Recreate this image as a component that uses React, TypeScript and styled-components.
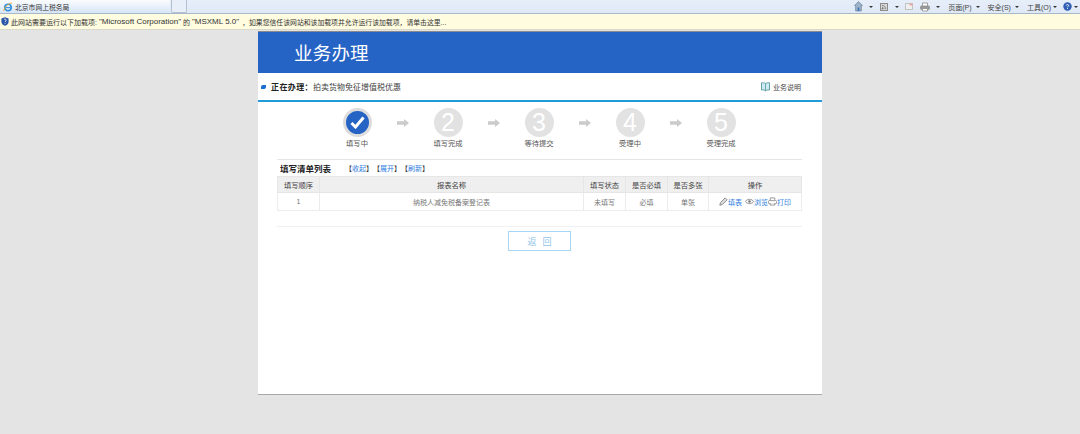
import React, {FC} from 'react';
import styled, {createGlobalStyle} from 'styled-components';

const GlobalStyle = createGlobalStyle`
  html, body {
    margin: 0;
    padding: 0;
    background: #e4e4e4;
  }
  body {
    font-family: "Liberation Sans", "Noto Sans CJK SC", sans-serif;
    overflow: hidden;
  }
`;

const Screen = styled.div`
  width: 1080px;
  height: 434px;
  display: flex;
  flex-direction: column;
  overflow: hidden;
`;

const TabStrip = styled.div`
  height: 13px;
  flex: none;
  display: flex;
  justify-content: space-between;
  background: linear-gradient(#e6eef9, #dfe9f6);
  border-bottom: 1px solid #a9b8c9;
`;

const Tabs = styled.div`
  display: flex;
  gap: 1px;
`;

const ActiveTab = styled.div`
  width: 170px;
  height: 13px;
  display: flex;
  align-items: center;
  gap: 2px;
  padding-left: 3px;
  box-sizing: border-box;
  background: linear-gradient(#fbfcfe, #d6e6f8);
  font-size: 6.8px;
  color: #333;
`;

const NewTab = styled.div`
  width: 16px;
  height: 13px;
  box-sizing: border-box;
  background: #e9eff8;
  border: 1px solid #b4c0cf;
  border-top: none;
  border-radius: 0 0 2px 2px;
`;

const Tools = styled.div`
  display: flex;
  align-items: center;
  padding-right: 2px;
  font-size: 7px;
  color: #444;
`;

const ToolIcon = styled.span<{ $ml?: number }>`
  display: flex;
  margin-left: ${({$ml = 7}) => $ml}px;
`;

const ToolLabel = styled.span`
  margin-left: 8px;
  white-space: nowrap;
`;

const Caret = styled.span<{ $ml?: number }>`
  width: 0;
  height: 0;
  margin-left: ${({$ml = 6}) => $ml}px;
  border-left: 2.5px solid transparent;
  border-right: 2.5px solid transparent;
  border-top: 2.5px solid #333;
`;

const InfoBar = styled.div`
  height: 15px;
  flex: none;
  display: flex;
  align-items: center;
  padding-left: 1px;
  background: #fffce0;
  border-bottom: 1px solid #d8d8cc;
  font-size: 7px;
  color: #333;
  white-space: pre;
`;

const InfoIcon = styled.span`
  display: flex;
  margin-right: 2px;
`;

const Latin = styled.span`
  font-size: 8px;
`;

const InfoRest = styled.span`
  margin-left: 3px;
  font-size: 6.85px;
`;

const Stage = styled.div`
  flex: 1;
  display: flex;
  justify-content: center;
  align-items: flex-start;
`;

const Page = styled.div`
  width: 564px;
  height: 364px;
  margin-top: 1px;
  box-sizing: border-box;
  background: #fff;
  border-top: 1px solid #8a8a8a;
  border-bottom: 1px solid #a8a8a8;
`;

const Banner = styled.div`
  height: 41px;
  box-sizing: border-box;
  display: flex;
  align-items: center;
  padding: 0 0 2px 36px;
  background: #2563c5;
  color: #fff;
  font-size: 18.5px;
  letter-spacing: 0.2px;
`;

const Working = styled.div`
  height: 27px;
  display: flex;
  align-items: center;
  padding: 0 21px 0 3px;
  border-bottom: 2px solid #1f9bd8;
  font-size: 8px;
  color: #444;
`;

const Dot = styled.span`
  width: 5px;
  height: 4px;
  margin-right: 5px;
  background: #1b6fd0;
  border-radius: 2px 0 2px 0;
`;

const WorkingLabel = styled.b`
  color: #222;
  letter-spacing: 0.4px;
`;

const HelpLink = styled.span`
  margin-left: auto;
  display: flex;
  align-items: center;
  gap: 3px;
  font-size: 7px;
  color: #444;
`;

const Steps = styled.div`
  display: flex;
  justify-content: center;
  align-items: flex-start;
  padding: 6px 2px 0 0;
  height: 51px;
`;

const Step = styled.div`
  width: 30px;
  display: flex;
  flex-direction: column;
  align-items: center;
`;

const Circle = styled.div<{ $active?: boolean }>`
  width: 29px;
  height: 29px;
  flex: none;
  box-sizing: border-box;
  display: flex;
  align-items: center;
  justify-content: center;
  border-radius: 50%;
  background: ${({$active}) => ($active ? '#2563c5' : '#e2e2e2')};
  border: ${({$active}) => ($active ? '3px solid #dcdcdc' : 'none')};
  color: #fff;
  font-size: 25px;
`;

const StepName = styled.div`
  margin-top: 2px;
  font-size: 7.3px;
  line-height: 10px;
  color: #555;
  white-space: nowrap;
`;

const StepArrow = styled.div`
  width: 61px;
  height: 29px;
  display: flex;
  align-items: center;
  justify-content: center;
`;

const Content = styled.div`
  margin: 0 20px 0 19px;
`;

const ListHead = styled.div`
  height: 16px;
  display: flex;
  align-items: center;
  gap: 14px;
  padding-left: 3px;
  border-top: 1px solid #e6e6e6;
  font-size: 8.5px;
  font-weight: bold;
  color: #222;
`;

const Actions = styled.div`
  display: flex;
  font-size: 7px;
  font-weight: normal;
  color: #333;
`;

const Link = styled.span`
  color: #2f7de0;
`;

const Table = styled.table`
  width: 100%;
  border-collapse: collapse;
  table-layout: fixed;
  font-size: 7px;
  color: #777;
`;

const Th = styled.th<{ $w?: number }>`
  width: ${({$w}) => ($w ? `${$w}px` : 'auto')};
  height: 15px;
  padding: 0;
  background: #efefef;
  border: 1px solid #e6e6e6;
  font-size: 7.3px;
  font-weight: normal;
  color: #444;
`;

const Td = styled.td`
  height: 17px;
  padding: 0;
  border: 1px solid #ececec;
  text-align: center;
`;

const OpsRow = styled.div`
  display: flex;
  justify-content: center;
  align-items: center;
  white-space: nowrap;
  color: #2f7de0;
`;

const OpIcon = styled.svg`
  flex: none;
`;

const OpGap = styled.span`
  width: 3px;
`;

const Footer = styled.div`
  margin-top: 15px;
  padding-top: 4px;
  border-top: 1px solid #f0f0f0;
  display: flex;
  justify-content: center;
`;

const BackButton = styled.div`
  width: 63px;
  height: 20px;
  box-sizing: border-box;
  display: flex;
  align-items: center;
  justify-content: center;
  border: 1px solid #a8d4f5;
  color: #8fc4ec;
  font-size: 9px;
  letter-spacing: 6px;
  text-indent: 6px;
`;

const IeIcon: FC = () => (
  <svg width="10" height="10" viewBox="0 0 10 10">
    <circle cx="5" cy="5.5" r="3.2" fill="none" stroke="#2f8fe0" strokeWidth="1.6"/>
    <path d="M2.5 5.6h5" stroke="#2f8fe0" strokeWidth="1.1"/>
    <path d="M1 9C0 7 5 1 9 1" fill="none" stroke="#e9a520" strokeWidth="0.9"/>
  </svg>
);

const ShieldIcon: FC = () => (
  <svg width="8" height="9" viewBox="0 0 8 9">
    <path d="M4 0.3 7.6 1.5V5C7.6 7 5.6 8.3 4 8.8 2.4 8.3 .4 7 .4 5V1.5Z" fill="#2c56a8"/>
    <path d="M3 2.6C3.4 1.8 5.3 2 5.2 3.2 5.1 4 4.1 4 4.1 5M4.1 5.9v.9" fill="none" stroke="#fff" strokeWidth=".8"/>
  </svg>
);

const HomeIcon: FC = () => (
  <svg width="9" height="11" viewBox="0 0 9 11">
    <path d="M4.5 0.5 8.5 4.5H7.4V10H1.6V4.5H.5Z" fill="#9fb3c8" stroke="#5d7a99" strokeWidth=".6"/>
    <path d="M3.6 6.5h1.8V10H3.6Z" fill="#3c74b4"/>
  </svg>
);

const FeedIcon: FC = () => (
  <svg width="8" height="8" viewBox="0 0 8 8">
    <rect x=".5" y=".5" width="7" height="7" fill="#d7d7d7" stroke="#8d8d8d"/>
    <path d="M2 2.3C4 2.3 5.7 4 5.7 6M2 4.2C3 4.2 3.8 5 3.8 6" fill="none" stroke="#707070" strokeWidth=".8"/>
    <circle cx="2.3" cy="5.8" r=".7" fill="#707070"/>
  </svg>
);

const MailIcon: FC = () => (
  <svg width="8" height="7" viewBox="0 0 8 7">
    <rect x=".5" y=".5" width="7" height="6" fill="#f0f0f0" stroke="#c2c2c2"/>
    <path d="M4.5 .5h3v2h-3Z" fill="#e6a8a0"/>
  </svg>
);

const PrintIcon: FC<{ size?: number; color?: string }> = ({size = 10, color = '#8d8d8d'}) => (
  <OpIcon width={size} height={size} viewBox="0 0 10 10">
    <path d="M2.5 4V1H7.5V4" fill="#fff" stroke={color} strokeWidth=".8"/>
    <rect x=".5" y="4" width="9" height="3.5" rx="1" fill={size === 10 ? '#9a9a9a' : '#fff'} stroke={color} strokeWidth=".8"/>
    <path d="M2.5 7V9H7.5V7" fill="#fff" stroke={color} strokeWidth=".8"/>
  </OpIcon>
);

const HelpIcon: FC = () => (
  <svg width="9" height="9" viewBox="0 0 9 9">
    <circle cx="4.5" cy="4.5" r="4.2" fill="#2f5fb5"/>
    <path d="M3.2 3.4C3.4 2.2 5.8 2.2 5.7 3.5 5.6 4.4 4.5 4.4 4.5 5.3M4.5 6.1v.9" fill="none" stroke="#fff" strokeWidth=".9"/>
  </svg>
);

const BookIcon: FC = () => (
  <svg width="9" height="10" viewBox="0 0 9 10">
    <path d="M.5 .8C2 .6 3.4.8 4.5 1.6 5.6.8 7 .6 8.5.8V8C7 7.8 5.6 8 4.5 8.8 3.4 8 2 7.8.5 8Z" fill="#cfeaf5" stroke="#3f8f8a" strokeWidth=".8"/>
    <path d="M4.5 1.6V8.8" stroke="#3f8f8a" strokeWidth=".7"/>
  </svg>
);

const CheckIcon: FC = () => (
  <svg width="15" height="13" viewBox="0 0 15 13">
    <path d="M1.5 7 5.5 11 13.5 1.5" fill="none" stroke="#fff" strokeWidth="3"/>
  </svg>
);

const ArrowIcon: FC = () => (
  <svg width="12" height="8" viewBox="0 0 12 8">
    <path d="M0 2.2H7V0L12 4 7 8V5.8H0Z" fill="#cbcbcb"/>
  </svg>
);

const PencilIcon: FC = () => (
  <OpIcon width="9" height="9" viewBox="0 0 9 9">
    <path d="M.8 8.2 1.5 5.6 6.2.9 8.1 2.8 3.4 7.5Z" fill="#ddd" stroke="#777" strokeWidth=".8"/>
  </OpIcon>
);

const EyeIcon: FC = () => (
  <OpIcon width="9" height="7" viewBox="0 0 9 7">
    <path d="M.3 3.5C2.3.6 6.7.6 8.7 3.5 6.7 6.4 2.3 6.4.3 3.5Z" fill="#fff" stroke="#777" strokeWidth=".8"/>
    <circle cx="4.5" cy="3.5" r="1.3" fill="#777"/>
  </OpIcon>
);

const stepNames = ['填写中', '填写完成', '等待提交', '受理中', '受理完成'];

export default function App() {
  return (
    <Screen>
      <GlobalStyle/>
      <TabStrip>
        <Tabs>
          <ActiveTab><IeIcon/>北京市网上税务局</ActiveTab>
          <NewTab/>
        </Tabs>
        <Tools>
          <ToolIcon><HomeIcon/></ToolIcon><Caret/>
          <ToolIcon><FeedIcon/></ToolIcon><Caret $ml={7}/>
          <ToolIcon $ml={6}><MailIcon/></ToolIcon>
          <ToolIcon><PrintIcon/></ToolIcon><Caret/>
          <ToolLabel>页面(P)</ToolLabel><Caret $ml={4}/>
          <ToolLabel>安全(S)</ToolLabel><Caret $ml={4}/>
          <ToolLabel>工具(O)</ToolLabel><Caret $ml={2}/>
          <ToolIcon $ml={6}><HelpIcon/></ToolIcon><Caret $ml={2}/>
        </Tools>
      </TabStrip>
      <InfoBar>
        <InfoIcon><ShieldIcon/></InfoIcon>
        此网站需要运行以下加载项: <Latin>"Microsoft Corporation"</Latin> 的 <Latin>"MSXML 5.0"</Latin>
        <InfoRest>，如果您信任该网站和该加载项并允许运行该加载项，请单击这里...</InfoRest>
      </InfoBar>
      <Stage>
        <Page>
          <Banner>业务办理</Banner>
          <Working>
            <Dot/>
            <WorkingLabel>正在办理：</WorkingLabel>拍卖货物免征增值税优惠
            <HelpLink><BookIcon/>业务说明</HelpLink>
          </Working>
          <Steps>
            {stepNames.map((name, i) => (
              <React.Fragment key={name}>
                {i > 0 && <StepArrow><ArrowIcon/></StepArrow>}
                <Step>
                  <Circle $active={i === 0}>{i === 0 ? <CheckIcon/> : i + 1}</Circle>
                  <StepName>{name}</StepName>
                </Step>
              </React.Fragment>
            ))}
          </Steps>
          <Content>
            <ListHead>
              填写清单列表
              <Actions>
                <span>【<Link>收起</Link>】</span>
                <span>【<Link>展开</Link>】</span>
                <span>【<Link>刷新</Link>】</span>
              </Actions>
            </ListHead>
            <Table>
              <thead>
                <tr>
                  <Th $w={41}>填写顺序</Th>
                  <Th>报表名称</Th>
                  <Th $w={41}>填写状态</Th>
                  <Th $w={41}>是否必填</Th>
                  <Th $w={40}>是否多张</Th>
                  <Th $w={92}>操作</Th>
                </tr>
              </thead>
              <tbody>
                <tr>
                  <Td>1</Td>
                  <Td>纳税人减免税备案登记表</Td>
                  <Td>未填写</Td>
                  <Td>必填</Td>
                  <Td>单张</Td>
                  <Td>
                    <OpsRow>
                      <PencilIcon/>填表<OpGap/><EyeIcon/>浏览<PrintIcon size={9} color="#777"/>打印
                    </OpsRow>
                  </Td>
                </tr>
              </tbody>
            </Table>
            <Footer>
              <BackButton>返回</BackButton>
            </Footer>
          </Content>
        </Page>
      </Stage>
    </Screen>
  );
}
